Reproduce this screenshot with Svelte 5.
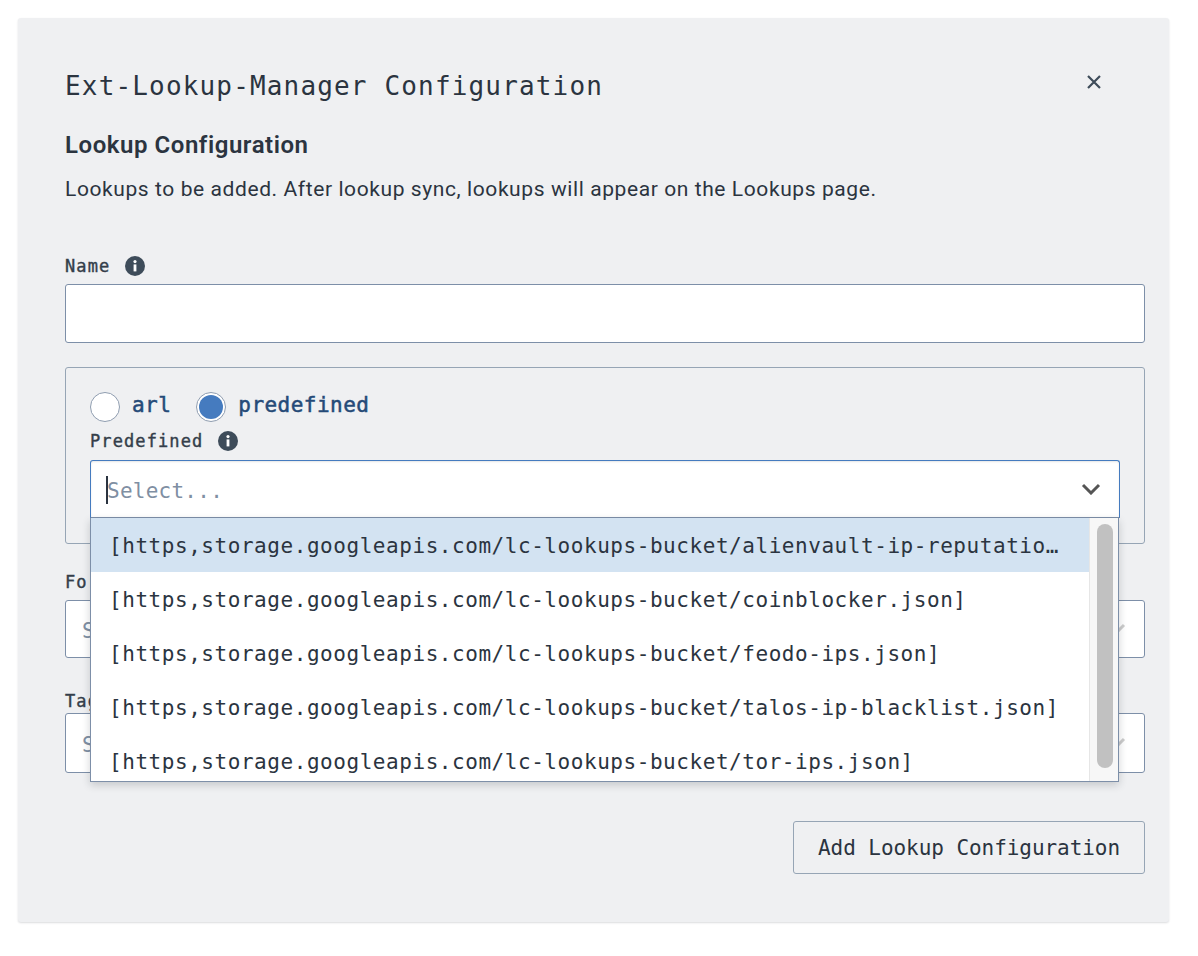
<script>
  const options = [
    '[https,storage.googleapis.com/lc-lookups-bucket/alienvault-ip-reputation.json]',
    '[https,storage.googleapis.com/lc-lookups-bucket/coinblocker.json]',
    '[https,storage.googleapis.com/lc-lookups-bucket/feodo-ips.json]',
    '[https,storage.googleapis.com/lc-lookups-bucket/talos-ip-blacklist.json]',
    '[https,storage.googleapis.com/lc-lookups-bucket/tor-ips.json]'
  ];
</script>

{#snippet info()}
  <svg class="info" width="20" height="20" viewBox="0 0 20 20">
    <circle cx="10" cy="10" r="10" fill="#3e4c5a" />
    <circle cx="10" cy="5.6" r="1.6" fill="#fff" />
    <rect x="8.6" y="8.4" width="2.8" height="7" fill="#fff" />
  </svg>
{/snippet}

{#snippet chevron(color)}
  <svg width="20" height="12" viewBox="0 0 20 12">
    <path d="M2 2l8 8 8-8" fill="none" stroke={color} stroke-width="3" />
  </svg>
{/snippet}

<div class="page">
  <div class="card">
    <header>
      <h1>Ext-Lookup-Manager Configuration</h1>
      <svg class="close" width="16" height="16" viewBox="0 0 16 16">
        <path d="M2 2l12 12M14 2L2 14" fill="none" stroke="#3e4c5a" stroke-width="2.2" />
      </svg>
    </header>
    <h2>Lookup Configuration</h2>
    <p>Lookups to be added. After lookup sync, lookups will appear on the Lookups page.</p>

    <div class="label name-label">Name {@render info()}</div>
    <div class="input"></div>

    <div class="box">
      <div class="radios">
        <span class="radio"></span>
        <span class="radio-text">arl</span>
        <span class="radio checked"><span></span></span>
        <span class="radio-text">predefined</span>
      </div>
      <div class="label pre-label">Predefined {@render info()}</div>
      <div class="select-wrap">
        <div class="select focused">
          <span class="caret"></span>
          <span class="placeholder">Select...</span>
          {@render chevron('#555')}
        </div>
        <div class="menu">
          <div class="list">
            {#each options as opt, i}
              <div class="option" class:active={i === 0}><span>{opt}</span></div>
            {/each}
          </div>
          <div class="track"><div class="thumb"></div></div>
        </div>
      </div>
    </div>

    <div class="label format-label">Format</div>
    <div class="select format">
      <span class="placeholder">Select...</span>
      {@render chevron('#ccc')}
    </div>

    <div class="label tags-label">Tags</div>
    <div class="select tags">
      <span class="placeholder">Select...</span>
      {@render chevron('#ccc')}
    </div>

    <div class="actions">
      <button>Add Lookup Configuration</button>
    </div>
  </div>
</div>

<style>
  :global(body) {
    background: #fff;
  }

  .page {
    padding: 18px 29px 34px 18px;
  }

  .card {
    box-sizing: border-box;
    height: 904px;
    padding: 0 24px 0 47px;
    background: #eff0f2;
    border-radius: 3px;
    box-shadow: 0 1px 2px rgba(30, 40, 50, 0.16);
    color: #2b3440;
    font-family: Roboto, sans-serif;
  }

  header {
    display: flex;
    justify-content: space-between;
    padding-top: 50px;
    height: 36px;
  }

  h1 {
    margin: 0;
    font: 400 26px/36px "DejaVu Sans Mono", monospace;
    letter-spacing: 1.16px;
    color: #2b3440;
  }

  .close {
    margin: 6px 43px 0 0;
  }

  h2 {
    margin: 26px 0 0;
    font-size: 24px;
    line-height: 30px;
    font-weight: 600;
    letter-spacing: 0.55px;
    color: #2b3440;
  }

  p {
    margin: 14px 0 0;
    font-size: 21px;
    line-height: 30px;
    letter-spacing: 0.59px;
  }

  .label {
    display: flex;
    align-items: center;
    gap: 15px;
    height: 22px;
    font: 400 17px/22px "DejaVu Sans Mono", monospace;
    -webkit-text-stroke: 0.4px #343e4a;
    letter-spacing: 1.1px;
    color: #343e4a;
  }

  .info {
    flex: none;
  }

  .name-label {
    margin-top: 51px;
  }

  .input {
    box-sizing: border-box;
    height: 59px;
    margin-top: 7px;
    background: #fff;
    border: 1px solid #7d8fa8;
    border-radius: 3px;
  }

  .box {
    box-sizing: border-box;
    height: 177px;
    margin-top: 24px;
    padding: 24px 24px 0;
    border: 1px solid #96a5b5;
    border-radius: 3px;
  }

  .radios {
    display: flex;
    align-items: center;
    height: 30px;
  }

  .radio {
    box-sizing: border-box;
    display: flex;
    align-items: center;
    justify-content: center;
    width: 30px;
    height: 30px;
    background: #fff;
    border: 1px solid #8f9db0;
    border-radius: 50%;
  }

  .radio span {
    width: 24px;
    height: 24px;
    background: #457bbf;
    border-radius: 50%;
  }

  .radio-text {
    margin: 0 25px 4px 12px;
    font: 400 21px/30px "DejaVu Sans Mono", monospace;
    -webkit-text-stroke: 0.5px #254a78;
    letter-spacing: 0.46px;
    color: #254a78;
  }

  .pre-label {
    margin-top: 8px;
  }

  .select-wrap {
    position: relative;
    margin-top: 8px;
  }

  .select {
    box-sizing: border-box;
    display: flex;
    align-items: center;
    justify-content: space-between;
    height: 58px;
    padding: 0 18px 0 16px;
    background: #fff;
    border: 1px solid #7d8fa8;
    border-radius: 3px;
  }

  .select.focused {
    border-color: #457bbf;
    border-bottom-color: #7d8fa8;
    border-radius: 3px 3px 0 0;
    box-shadow: inset 0 1px 2px rgba(0, 0, 0, 0.1);
  }

  .caret {
    position: absolute;
    left: 16px;
    top: 16px;
    width: 2px;
    height: 28px;
    background: #2b3440;
  }

  .placeholder {
    padding-top: 3px;
    font: 400 21px/30px "DejaVu Sans Mono", monospace;
    letter-spacing: 0.25px;
    color: #7f8fa3;
  }

  .menu {
    position: absolute;
    left: 0;
    right: 1px;
    top: 58px;
    display: flex;
    height: 264px;
    overflow: hidden;
    background: #fff;
    border: 1px solid #7d8fa8;
    border-top: none;
    box-shadow: 0 3px 8px rgba(30, 40, 50, 0.2);
    box-sizing: border-box;
  }

  .list {
    flex: 1;
    min-width: 0;
  }

  .option {
    box-sizing: border-box;
    display: flex;
    align-items: center;
    height: 54px;
    padding: 2px 28px 0 18px;
    font: 400 21px/30px "DejaVu Sans Mono", monospace;
    letter-spacing: 0.55px;
    color: #2b3440;
  }

  .option span {
    overflow: hidden;
    white-space: nowrap;
    text-overflow: ellipsis;
  }

  .option.active {
    background: #d3e3f2;
  }

  .track {
    box-sizing: border-box;
    flex: none;
    width: 29px;
    padding: 6px 5px 0 7px;
    background: #f7f7f7;
    border-left: 1px solid #e6e6e6;
  }

  .thumb {
    height: 244px;
    background: #c1c1c1;
    border-radius: 8px;
  }

  .format-label {
    margin-top: 27px;
  }

  .select.format {
    margin-top: 7px;
  }

  .tags-label {
    margin-top: 32px;
  }

  .select.tags {
    height: 60px;
    margin-top: 1px;
  }

  .actions {
    display: flex;
    justify-content: flex-end;
    margin-top: 48px;
  }

  button {
    box-sizing: border-box;
    width: 352px;
    height: 53px;
    padding: 0;
    background: transparent;
    border: 1px solid #96a5b5;
    border-radius: 3px;
    font: 400 21px/30px "DejaVu Sans Mono", monospace;
    letter-spacing: -0.06px;
    color: #2b3440;
  }
</style>
